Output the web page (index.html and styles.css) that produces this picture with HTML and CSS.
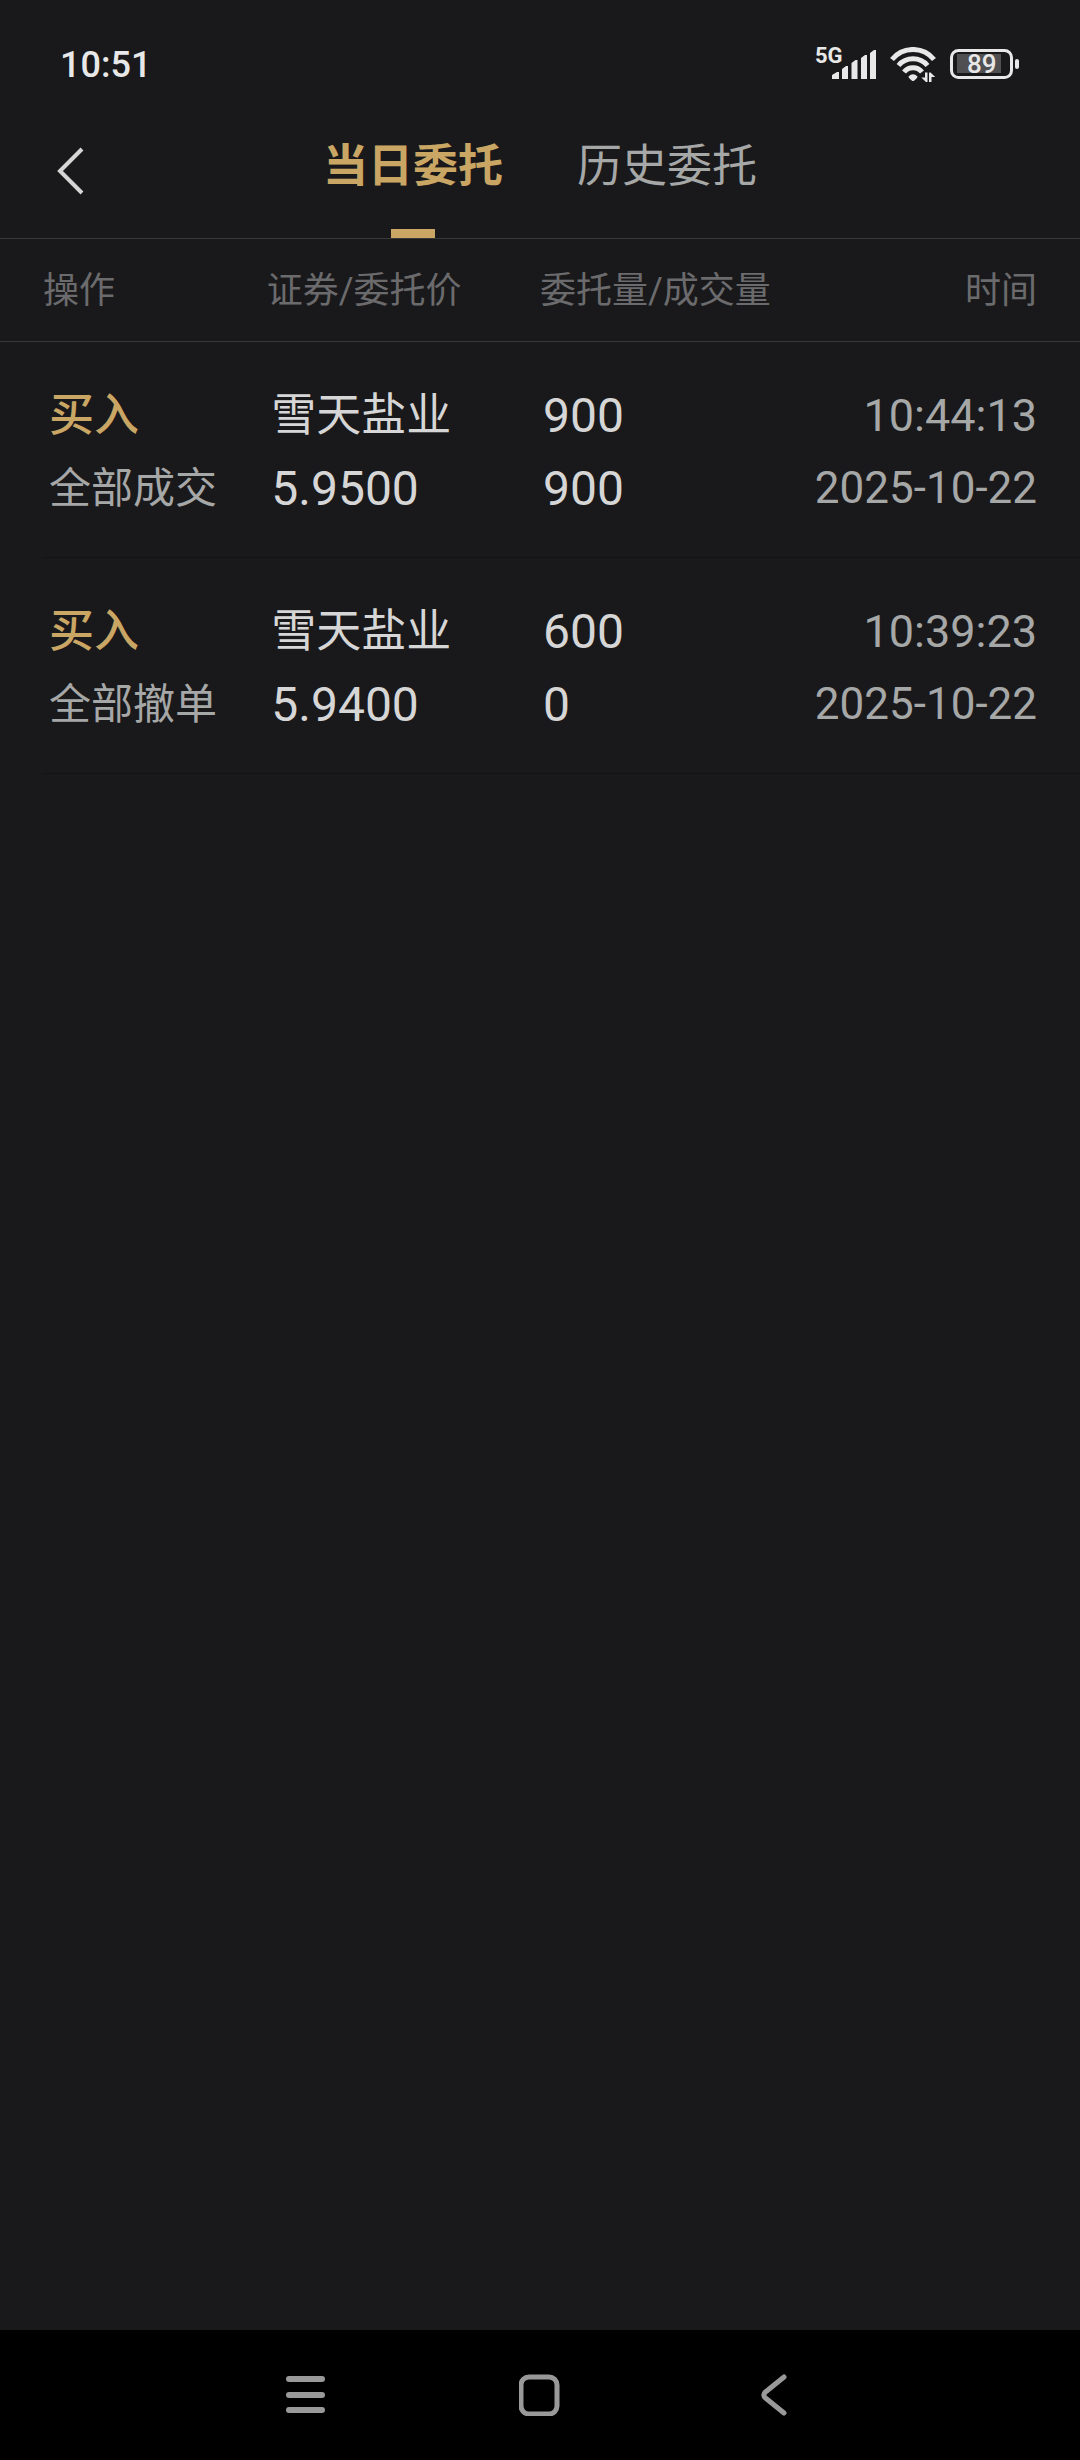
FILE: index.html
```html
<!DOCTYPE html>
<html lang="zh-CN">
<head>
    <meta charset="UTF-8">
    <meta name="viewport" content="width=device-width, initial-scale=1.0">
    <title>当日委托</title>
    <link rel="stylesheet" href="styles.css">
</head>
<body>
    <div class="status-bar">
        <span class="clock">10:51</span>
        <div class="status-icons">
            <svg class="signal" width="60" height="36" viewBox="0 0 60 36">
                <text x="-1" y="16" class="network">5G</text>
                <path d="M16 32v-4l5-3h2v7zM26 32V22l4-3h2v13zM35.500 32V16l4-3h2v19zM45 32V11l4-3h2v24zM54 32V6l4-3h2v29z"/>
            </svg>
            <svg class="wifi" width="46" height="36" viewBox="0 0 46 36">
                <path class="arc" d="M2 12.500a27 27 0 0 1 42 0M8.500 18.500a19 19 0 0 1 29 0M14 25a11.500 11.500 0 0 1 18 0"/>
                <path d="M18.500 29.500q4.500-4.500 9 0q0 1-1.500 2.500l-2 1.700q-1 .6-2 0l-2-1.700q-1.500-1.500-1.500-2.500z"/>
                <path d="M35 25.500h2.500V35H36l-4.700-4.500H35zM39 35v-9.500h1.500l4.700 4.500h-3.700v5z"/>
            </svg>
            <svg class="battery" width="70" height="36" viewBox="0 0 70 36">
                <rect class="case" x="1.500" y="3.500" width="60" height="27" rx="7"/>
                <rect class="level" x="7" y="7" width="44" height="19"/>
                <rect x="65" y="12" width="4" height="10" rx="2"/>
                <text x="17" y="26" class="percent">89</text>
            </svg>
        </div>
    </div>

    <header class="header">
        <button class="back" aria-label="返回">
            <svg width="28" height="48" viewBox="0 0 28 48"><path d="M25 2L3 24l22 22"/></svg>
        </button>
        <nav class="tabs">
            <a href="#today" class="tab active">当日委托</a>
            <a href="#history" class="tab">历史委托</a>
        </nav>
    </header>

    <main>
        <table class="orders">
            <thead>
                <tr>
                    <th>操作</th>
                    <th>证券/委托价</th>
                    <th>委托量/成交量</th>
                    <th>时间</th>
                </tr>
            </thead>
            <tbody>
                <tr>
                    <td><div class="side">买入</div><div class="state">全部成交</div></td>
                    <td><div>雪天盐业</div><div class="number">5.9500</div></td>
                    <td><div class="number">900</div><div class="number">900</div></td>
                    <td><div class="time">10:44:13</div><div class="date">2025-10-22</div></td>
                </tr>
                <tr>
                    <td><div class="side">买入</div><div class="state">全部撤单</div></td>
                    <td><div>雪天盐业</div><div class="number">5.9400</div></td>
                    <td><div class="number">600</div><div class="number">0</div></td>
                    <td><div class="time">10:39:23</div><div class="date">2025-10-22</div></td>
                </tr>
            </tbody>
        </table>
    </main>

    <footer class="nav-bar">
        <button aria-label="菜单">
            <svg width="42" height="42" viewBox="0 0 42 42"><path d="M4 5h33M4 21h33M4 36h33" stroke-width="6"/></svg>
        </button>
        <button aria-label="主页">
            <svg width="42" height="42" viewBox="0 0 42 42"><rect x="2" y="3" width="36" height="37" rx="8"/></svg>
        </button>
        <button aria-label="后退">
            <svg width="42" height="42" viewBox="0 0 42 42"><path d="M31 3L12.500 18q-3.500 3 0 6L31 39"/></svg>
        </button>
    </footer>
</body>
</html>
```
FILE: styles.css
```css
* {
    box-sizing: border-box;
}

body {
    margin: 0;
    min-height: 100vh;
    display: flex;
    flex-direction: column;
    background-color: #19191b;
    color: #d6d6d6;
    font-family: Roboto, "Noto Sans CJK SC", sans-serif;
}

button {
    padding: 0;
    border: none;
    background: none;
}

svg {
    display: block;
}

/* status bar */
.status-bar {
    display: flex;
    justify-content: space-between;
    align-items: center;
    height: 130px;
    padding: 0 60px;
    color: #e8e8e8;
}

.clock {
    font-size: 36px;
    font-weight: 500;
}

.status-icons {
    display: flex;
    gap: 14px;
    fill: #e8e8e8;
}

.signal {
    overflow: visible;
}

.network {
    font-size: 22px;
    font-weight: 700;
}

.arc {
    fill: none;
    stroke: #e8e8e8;
    stroke-width: 5;
}

.case {
    fill: none;
    stroke: #e8e8e8;
    stroke-width: 3;
}

.level {
    fill: #505052;
}

.percent {
    font-size: 26px;
    font-weight: 500;
}

/* title tabs */
.header {
    display: grid;
    grid-template-columns: 1fr auto 1fr;
    height: 109px;
    padding: 0 57px;
    border-bottom: 1px solid #38393a;
}

.back {
    justify-self: start;
    align-self: start;
    margin-top: 17px;
}

.back path {
    fill: none;
    stroke: #d6d6d6;
    stroke-width: 4;
}

.tabs {
    display: flex;
    gap: 74px;
}

.tab {
    display: flex;
    flex-direction: column;
    justify-content: space-between;
    align-items: center;
    color: #a6a7a7;
    font-size: 45px;
    line-height: 74px;
    text-decoration: none;
}

.tab.active {
    color: #caa665;
    font-weight: 700;
}

.tab.active::after {
    content: "";
    width: 44px;
    height: 9px;
    background-color: #caa665;
}

/* order list */
.orders,
.orders thead,
.orders tbody {
    display: block;
}

.orders tr {
    display: grid;
    grid-template-columns: minmax(0, 9fr) minmax(0, 11fr) minmax(0, 11fr) minmax(0, 9fr);
}

.orders thead tr {
    padding: 26px 43px 23px;
    border-bottom: 1px solid #38393a;
}

.orders tbody tr {
    margin-left: 42px;
    padding: 37px 43px 32px 7px;
    border-bottom: 1px solid #131315;
}

.orders th,
.orders td {
    padding: 0;
    text-align: left;
    white-space: nowrap;
}

.orders th {
    color: #6b6b6d;
    font-size: 36px;
    font-weight: 400;
    line-height: 53px;
}

.orders td {
    font-size: 45px;
    line-height: 73px;
}

.orders th:last-child,
.orders td:last-child {
    justify-self: end;
    text-align: right;
}

.orders .side {
    color: #caa665;
    font-weight: 500;
}

.orders .state {
    color: #a6a7a7;
    font-size: 42px;
}

.orders .number {
    font-size: 48px;
}

.orders .time {
    color: #a6a7a7;
    font-size: 45px;
}

.orders .date {
    color: #a6a7a7;
    font-size: 44px;
}

/* system navigation */
.nav-bar {
    display: flex;
    justify-content: center;
    align-items: center;
    gap: 192px;
    height: 130px;
    margin-top: auto;
    background-color: #000;
}

.nav-bar svg {
    fill: none;
    stroke: #999;
    stroke-width: 5;
    stroke-linecap: round;
}
```
